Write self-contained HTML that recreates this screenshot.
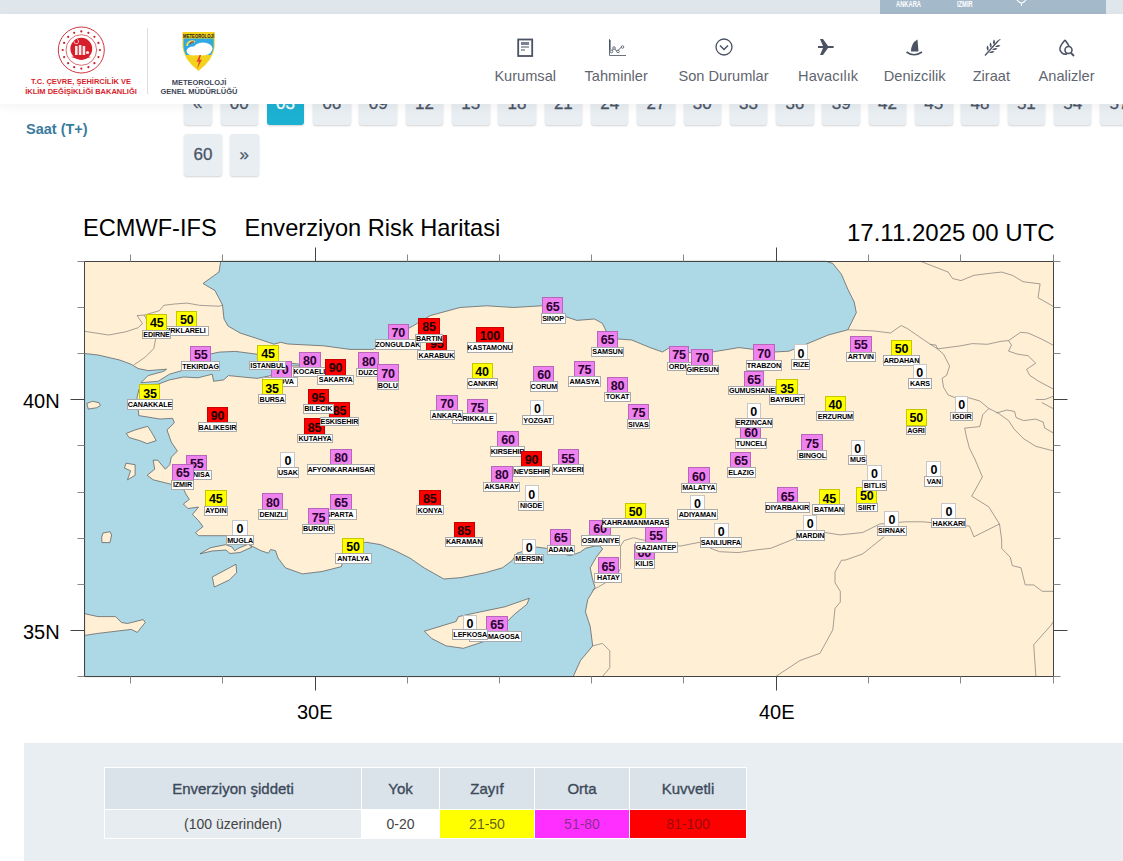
<!DOCTYPE html>
<html><head><meta charset="utf-8">
<style>
*{box-sizing:border-box;margin:0;padding:0}
html,body{width:1123px;height:861px;overflow:hidden;background:#fff;font-family:"Liberation Sans",sans-serif}
.abs{position:absolute}
.pg{position:absolute;height:42px;background:#e9eef2;border-radius:3px;box-shadow:0 1px 2px rgba(0,0,0,0.18);color:#4a5568;-webkit-text-stroke:0.3px currentColor;font-size:17px;text-align:center;line-height:42px}
.pg.act{background:#1cb1d2;color:#fff}
.nb{position:absolute;border:0.6px solid rgba(0,0,0,0.22);font-weight:bold;font-size:12.5px;line-height:17px;padding-top:0.3px;text-align:center;letter-spacing:-0.2px}
.mb{position:absolute;background:#fff;border:0.7px solid #aaa;font-weight:bold;font-size:7.2px;line-height:1;text-align:center;color:#000;white-space:nowrap;display:flex;justify-content:center;align-items:center;letter-spacing:-0.1px}
.nav{position:absolute;top:67.5px;font-size:14.6px;color:#5f6670;white-space:nowrap}
.ttl{position:absolute;font-size:24px;color:#000;white-space:nowrap;line-height:1}
.ax{position:absolute;font-size:20px;color:#000;white-space:nowrap;line-height:1}
table.lg{position:absolute;left:104px;top:767px;border-collapse:collapse;font-size:15px}
.lg td{border:1px solid #fff;text-align:center;color:#3b4a5a}
</style></head><body>
<!-- top bar -->
<div class="abs" style="left:0;top:0;width:1123px;height:13.5px;background:#dfe6ec"></div>
<div class="abs" style="left:880px;top:0;width:226px;height:13.5px;background:#a4b9ca"></div>
<div class="abs" style="left:895.5px;top:-0.5px;font-size:9px;color:#fff;font-weight:bold;line-height:9px;transform:scaleX(0.64);transform-origin:left">ANKARA</div>
<div class="abs" style="left:956.5px;top:-0.5px;font-size:9px;color:#fff;font-weight:bold;line-height:9px;transform:scaleX(0.64);transform-origin:left">İZMİR</div>
<svg class="abs" style="left:1016px;top:0" width="11" height="6" viewBox="0 0 11 6"><path d="M1 0 Q5.5 6 10 0" fill="none" stroke="#fff" stroke-width="1.2"/><line x1="5.5" y1="3" x2="5.5" y2="6" stroke="#fff" stroke-width="1"/></svg>

<!-- pagination -->
<div class="abs" style="left:26px;top:121px;font-size:14.5px;color:#3a7a9e;font-weight:bold;line-height:16px">Saat (T+)</div>
<div class="pg" style="left:184px;top:83px;width:27.5px">«</div>
<div class="pg" style="left:220.5px;top:83px;width:37.5px">00</div>
<div class="pg act" style="left:266.8px;top:83px;width:37.5px">03</div>
<div class="pg" style="left:313.1px;top:83px;width:37.5px">06</div>
<div class="pg" style="left:359.4px;top:83px;width:37.5px">09</div>
<div class="pg" style="left:405.7px;top:83px;width:37.5px">12</div>
<div class="pg" style="left:452.0px;top:83px;width:37.5px">15</div>
<div class="pg" style="left:498.3px;top:83px;width:37.5px">18</div>
<div class="pg" style="left:544.6px;top:83px;width:37.5px">21</div>
<div class="pg" style="left:590.9px;top:83px;width:37.5px">24</div>
<div class="pg" style="left:637.2px;top:83px;width:37.5px">27</div>
<div class="pg" style="left:683.5px;top:83px;width:37.5px">30</div>
<div class="pg" style="left:729.8px;top:83px;width:37.5px">33</div>
<div class="pg" style="left:776.1px;top:83px;width:37.5px">36</div>
<div class="pg" style="left:822.4px;top:83px;width:37.5px">39</div>
<div class="pg" style="left:868.7px;top:83px;width:37.5px">42</div>
<div class="pg" style="left:915.0px;top:83px;width:37.5px">45</div>
<div class="pg" style="left:961.3px;top:83px;width:37.5px">48</div>
<div class="pg" style="left:1007.6px;top:83px;width:37.5px">51</div>
<div class="pg" style="left:1053.9px;top:83px;width:37.5px">54</div>
<div class="pg" style="left:1100.2px;top:83px;width:37.5px">57</div>
<div class="pg" style="left:184px;top:134px;width:38px">60</div>
<div class="pg" style="left:230px;top:134px;width:28.5px">»</div>

<!-- header -->
<div class="abs" style="left:0;top:13.5px;width:1123px;height:90.5px;background:#fff;box-shadow:0 3px 10px rgba(0,0,0,0.05)"></div>
<!-- ministry logo -->
<svg class="abs" style="left:54px;top:24px" width="55" height="55" viewBox="0 0 55 55">
<circle cx="27.3" cy="26" r="23" fill="none" stroke="#c8202c" stroke-width="0.9"/>
<circle cx="27.3" cy="26" r="15.3" fill="none" stroke="#d0303a" stroke-width="0.7"/>
<circle cx="27.30" cy="7.40" r="1.1" fill="#c8202c"/><circle cx="34.42" cy="8.82" r="1.1" fill="#c8202c"/><circle cx="40.45" cy="12.85" r="1.1" fill="#c8202c"/><circle cx="44.48" cy="18.88" r="1.1" fill="#c8202c"/><circle cx="45.90" cy="26.00" r="1.1" fill="#c8202c"/><circle cx="44.48" cy="33.12" r="1.1" fill="#c8202c"/><circle cx="40.45" cy="39.15" r="1.1" fill="#c8202c"/><circle cx="34.42" cy="43.18" r="1.1" fill="#c8202c"/><circle cx="27.30" cy="44.60" r="1.1" fill="#c8202c"/><circle cx="20.18" cy="43.18" r="1.1" fill="#c8202c"/><circle cx="14.15" cy="39.15" r="1.1" fill="#c8202c"/><circle cx="10.12" cy="33.12" r="1.1" fill="#c8202c"/><circle cx="8.70" cy="26.00" r="1.1" fill="#c8202c"/><circle cx="10.12" cy="18.88" r="1.1" fill="#c8202c"/><circle cx="14.15" cy="12.85" r="1.1" fill="#c8202c"/><circle cx="20.18" cy="8.82" r="1.1" fill="#c8202c"/>
<circle cx="27.3" cy="24.7" r="10.9" fill="#d71f2b"/>
<rect x="21" y="22" width="2.6" height="9" fill="#fde8e8"/><rect x="24.8" y="21" width="2.6" height="10" fill="#fde8e8"/><rect x="28.6" y="22" width="2.6" height="9" fill="#fde8e8"/><circle cx="33.5" cy="28.5" r="1.6" fill="#fde8e8"/>
<path d="M20 17 a2.3 2.3 0 1 0 3.2 -1.6" fill="none" stroke="#fde8e8" stroke-width="0.8"/>
<path d="M17 33 Q27 30 37 33 L27.3 36 Z" fill="#d71f2b"/>
</svg>
<div class="abs" style="left:20px;top:77px;width:122px;text-align:center;font-size:7.5px;font-weight:bold;color:#d71f2b;line-height:9.5px">T.C. ÇEVRE, ŞEHİRCİLİK VE<br>İKLİM DEĞİŞİKLİĞİ BAKANLIĞI</div>
<div class="abs" style="left:147px;top:28px;width:1px;height:66px;background:#ddd"></div>
<!-- meteoroloji logo -->
<svg class="abs" style="left:181px;top:31px" width="35" height="41" viewBox="0 0 35 41">
<path d="M1.5 1 H33.7 V15 Q33 28 17.5 40 Q2 28 1.5 15 Z" fill="#f2d21c"/>
<path d="M2.6 7.6 H32.6 V17 Q32 20 30 24 H5 Q3 20 2.6 17 Z" fill="#30a8e2"/>
<text x="17.6" y="6.6" font-size="6.2" font-weight="bold" text-anchor="middle" fill="#1a1a1a" font-family="Liberation Sans" textLength="31" lengthAdjust="spacingAndGlyphs">METEOROLOJİ</text>
<path d="M6 15 a5 5 0 0 1 8 -4" fill="none" stroke="#f5e05a" stroke-width="1.6"/>
<path d="M9 13.5 a3 3 0 0 1 4 -2.5" fill="none" stroke="#b5422a" stroke-width="1.3"/>
<ellipse cx="22" cy="17.5" rx="9.5" ry="6" fill="#fff"/><ellipse cx="12.5" cy="20" rx="7" ry="4.5" fill="#fff"/><ellipse cx="20" cy="21" rx="10" ry="3.5" fill="#fff"/>
<path d="M18.5 24 L15.5 31 L18 30.5 L16 38 L21 28.5 L18.5 29 L20 24 Z" fill="#e8402a"/>
</svg>
<div class="abs" style="left:150px;top:77.5px;width:98px;text-align:center;font-size:7.5px;font-weight:bold;color:#3d4657;line-height:9px">METEOROLOJİ<br>GENEL MÜDÜRLÜĞÜ</div>
<svg class="abs" style="left:516px;top:38px" width="19" height="19" viewBox="0 0 19 19"><rect x="2.2" y="1.5" width="14" height="16.5" fill="none" stroke="#4a5263" stroke-width="1.8"/><rect x="5" y="4" width="8" height="3" fill="#7a8190"/><line x1="5" y1="9" x2="13" y2="9" stroke="#4a5263" stroke-width="1"/><line x1="5" y1="12" x2="9" y2="12" stroke="#4a5263" stroke-width="1"/></svg>
<div class="nav" style="left:494.4px">Kurumsal</div>
<svg class="abs" style="left:608px;top:38px" width="19" height="19" viewBox="0 0 19 19"><path d="M1.5 1 V17.5 H18" fill="none" stroke="#6a7280" stroke-width="1"/><line x1="1.8" y1="2" x2="1.8" y2="12" stroke="#4a5263" stroke-width="1.6"/><path d="M3 14 L6 10 L9 13.5 L13.5 9" fill="none" stroke="#4a5263" stroke-width="0.9"/><circle cx="3.5" cy="13.5" r="1.3" fill="#fff" stroke="#4a5263" stroke-width="0.8"/><circle cx="6" cy="10" r="1.3" fill="#fff" stroke="#4a5263" stroke-width="0.8"/><circle cx="10" cy="13.5" r="1.3" fill="#fff" stroke="#4a5263" stroke-width="0.8"/><circle cx="14.5" cy="9" r="1.3" fill="#fff" stroke="#4a5263" stroke-width="0.8"/></svg>
<div class="nav" style="left:584.5px">Tahminler</div>
<svg class="abs" style="left:715px;top:38px" width="19" height="19" viewBox="0 0 19 19"><circle cx="9" cy="9" r="8" fill="none" stroke="#4a5263" stroke-width="1.3"/><path d="M5 7.5 L9 11.5 L13 7.5" fill="none" stroke="#4a5263" stroke-width="1.5"/></svg>
<div class="nav" style="left:678.5px">Son Durumlar</div>
<svg class="abs" style="left:817px;top:38px" width="19" height="19" viewBox="0 0 19 19"><path d="M1 8 H6 L3 1 H6 L11 8 H16 Q18 9 16 10 H11 L6 17 H3 L6 10 H1 Z" fill="#4a5263"/></svg>
<div class="nav" style="left:798.1px">Havacılık</div>
<svg class="abs" style="left:905px;top:38px" width="19" height="19" viewBox="0 0 19 19"><path d="M6 13.5 Q6 5 12.5 1.5 Q13 8 13.5 13.5 Z" fill="#4a5263"/><path d="M1.5 14 Q9 19.5 17 14" fill="none" stroke="#4a5263" stroke-width="1.6"/></svg>
<div class="nav" style="left:883.8px">Denizcilik</div>
<svg class="abs" style="left:983px;top:38px" width="19" height="19" viewBox="0 0 19 19"><path d="M2 17.5 L15 3" stroke="#4a5263" stroke-width="1.3"/><path d="M5 13 Q2.5 10 4.5 7.5 Q6.5 10 5 13 M8 10 Q5.5 7 7.5 4.5 Q9.5 7 8 10 M11 7 Q9 4 11 1.5 Q13 4 11 7 M6 14.5 Q9 16 11.5 13.5 Q9 12 6 14.5 M9 11.5 Q12 13 14.5 10.5 Q12 9 9 11.5 M12 8.5 Q15 10 17.5 7.5 Q15 6 12 8.5 M13.5 4.5 Q16 3 18 1 Q15 1 13.5 4.5" fill="#4a5263"/></svg>
<div class="nav" style="left:972.7px">Ziraat</div>
<svg class="abs" style="left:1057px;top:38px" width="19" height="19" viewBox="0 0 19 19"><path d="M8 2 Q2 9 3 12 Q5 17 10 16" fill="none" stroke="#4a5263" stroke-width="1.6"/><path d="M8 2 Q11 6 12 8" fill="none" stroke="#4a5263" stroke-width="1.6"/><circle cx="11.5" cy="12" r="3.5" fill="none" stroke="#4a5263" stroke-width="1.6"/><path d="M14 15 L17 18" stroke="#4a5263" stroke-width="1.8"/></svg>
<div class="nav" style="left:1038.6px">Analizler</div>

<!-- map titles -->
<div class="ttl" style="left:83px;top:216.5px;font-size:23.6px">ECMWF-IFS</div>
<div class="ttl" style="left:244.5px;top:216.5px;font-size:23.6px">Enverziyon Risk Haritasi</div>
<div class="ttl" style="left:847px;top:221px">17.11.2025 00 UTC</div>
<svg width="1123" height="861" viewBox="0 0 1123 861" style="position:absolute;left:0;top:0">
<rect x="84.6" y="261.3" width="968.4" height="415.3" fill="#ffefd5"/>
<polygon points="220.7,261.3 826.3,261.3 832.8,263.5 841.4,274.2 847.8,289.2 854.2,302.0 856.3,312.7 850.0,325.5 847.8,329.8 828.0,335.1 806.7,344.0 789.0,351.2 774.7,352.0 739.0,347.6 712.3,352.0 690.4,352.7 669.6,347.6 662.5,352.0 650.0,347.6 631.7,340.0 618.0,339.0 606.2,331.1 602.3,323.3 594.4,319.0 576.8,320.4 565.0,316.4 559.7,308.4 542.0,305.8 513.4,307.5 486.7,305.8 460.0,307.5 430.3,315.6 412.5,326.2 385.8,340.5 373.3,349.4 350.0,349.4 323.4,345.8 287.8,344.0 280.7,342.3 274.0,344.2 257.0,338.5 240.0,333.0 228.0,326.0 224.0,319.0 222.5,305.0 215.0,290.6 203.0,283.5 219.0,272.0" fill="#add8e6" stroke="#555" stroke-width="0.7"/>
<polygon points="84.6,353.5 98.2,355.0 119.6,360.0 131.0,364.2 138.1,368.5 148.1,370.6 166.6,369.2 163.8,371.3 148.1,375.6 141.0,382.7 158.1,381.3 169.5,374.2 183.7,370.0 190.8,362.8 209.4,354.2 219.3,352.1 235.6,351.4 257.0,354.2 267.0,358.5 272.0,361.0 288.3,362.8 299.7,364.2 299.7,366.0 291.0,366.0 271.0,375.6 257.0,378.4 242.7,377.0 228.5,375.6 223.6,379.9 213.6,381.3 212.2,374.2 198.0,377.8 183.7,377.0 169.5,379.9 158.1,384.2 141.0,385.0 138.8,390.0 137.0,397.8 138.8,415.6 160.0,419.0 172.6,418.3 174.4,422.7 167.0,430.0 171.3,442.1 177.4,451.1 171.3,457.2 169.8,464.7 165.3,469.2 157.7,460.2 153.2,460.2 154.7,469.2 147.2,475.3 153.2,479.8 165.3,482.8 171.3,484.3 183.4,488.9 186.4,494.9 189.4,499.4 183.4,504.0 187.9,508.5 198.5,507.0 192.5,514.5 198.5,520.6 203.0,526.6 195.5,532.6 198.5,535.7 225.7,535.7 234.7,543.0 248.3,544.2 261.0,550.7 268.3,553.2 270.7,549.5 275.6,550.7 278.0,558.0 285.4,567.8 302.4,573.9 322.0,571.5 341.5,566.6 343.9,553.2 351.2,545.9 365.9,542.2 380.5,544.6 395.1,550.7 409.8,558.0 424.4,568.0 443.9,579.0 461.0,577.6 485.4,572.7 502.4,567.8 512.2,560.5 517.0,553.2 536.6,547.1 546.3,548.3 558.5,553.2 570.7,555.6 580.5,552.0 585.4,548.3 594.3,546.1 600.0,545.9 602.7,548.9 596.2,557.3 590.2,567.8 592.7,580.0 595.1,587.3 587.8,599.5 585.4,611.7 590.2,626.3 592.7,645.9 580.5,660.5 573.2,676.6 84.6,676.6" fill="#add8e6" stroke="#555" stroke-width="0.7"/>
<polygon points="86.8,403.4 92.5,401.3 99.0,402.7 100.4,405.5 96.8,407.7 88.3,409.1" fill="#ffefd5" stroke="#555" stroke-width="0.7"/>
<polygon points="126.3,433.4 135.0,430.0 147.7,426.3 152.0,433.0 156.2,440.6 147.2,443.6 139.6,440.6 129.0,437.5" fill="#ffefd5" stroke="#555" stroke-width="0.7"/>
<polygon points="126.0,463.2 135.1,464.7 135.1,475.3 127.5,479.8 130.6,470.8 124.5,468.0" fill="#ffefd5" stroke="#555" stroke-width="0.7"/>
<polygon points="103.0,533.0 110.0,531.7 111.6,535.0 110.0,542.6 102.0,542.6 101.7,537.0" fill="#ffefd5" stroke="#555" stroke-width="0.7"/>
<polygon points="212.3,577.0 236.0,564.3 236.6,572.7 229.3,580.0 214.3,587.0" fill="#ffefd5" stroke="#555" stroke-width="0.7"/>
<polygon points="84.6,613.7 97.8,616.6 115.5,616.6 121.5,622.5 127.4,623.5 143.2,619.6 145.2,622.5 137.3,632.4 131.3,629.4 97.8,633.4 84.6,635.4" fill="#ffefd5" stroke="#555" stroke-width="0.7"/>
<polygon points="424.4,631.2 456.1,621.5 458.5,616.6 475.6,612.9 504.9,606.8 529.3,598.3 526.8,604.4 514.6,614.1 507.3,621.5 502.4,638.5 485.4,641.0 463.4,648.3 446.3,645.9 431.7,638.5" fill="#ffefd5" stroke="#555" stroke-width="0.7"/>
<polygon points="200.0,553.8 210.6,547.7 225.7,544.7 232.0,547.0 234.7,550.8 239.0,548.0 248.3,544.2 252.0,547.0 240.0,552.5 230.0,553.5 226.0,550.0 212.0,551.0" fill="#ffefd5" stroke="#555" stroke-width="0.7"/>
<polyline points="84.6,331.3 108.7,335.0 125.4,331.9 137.9,327.8 142.5,323.6 137.1,315.6 144.2,315.1" fill="none" stroke="#666" stroke-width="0.6"/>
<polyline points="144.2,315.1 159.4,310.7 163.8,305.3 174.5,304.0 187.0,303.1 199.5,305.3 219.0,306.2 222.6,305.3" fill="none" stroke="#666" stroke-width="0.6"/>
<polyline points="144.2,315.1 150.0,325.0 155.8,338.3 153.8,348.5 145.3,357.1 133.9,364.9" fill="none" stroke="#666" stroke-width="0.6"/>
<polyline points="920.5,261.3 948.2,272.1 952.5,278.5 961.0,280.6 973.9,275.3 991.0,273.2 1001.7,272.1 1012.3,275.3 1023.0,281.7 1040.1,283.9 1038.0,297.7 1053.0,306.3" fill="none" stroke="#666" stroke-width="0.6"/>
<polyline points="847.8,329.8 873.4,330.9 890.5,333.0 901.2,325.5 907.6,328.7 924.7,340.5 937.5,348.9" fill="none" stroke="#666" stroke-width="0.6"/>
<polyline points="930.0,344.3 936.0,345.1 937.5,348.9 960.2,345.9 972.3,343.6 987.4,344.3 1001.0,341.3 1008.5,340.6 1020.6,332.3 1028.1,333.0 1041.7,339.1 1053.0,345.1" fill="none" stroke="#666" stroke-width="0.6"/>
<polyline points="937.5,348.9 943.6,354.2 949.6,366.2 946.6,375.3 942.1,378.3 943.6,387.4 948.1,394.9 955.7,397.9 969.3,397.9 979.8,401.0 988.9,408.5 998.0,413.0 1008.5,420.6 1014.6,429.7 1023.6,438.7 1035.7,446.3 1053.0,450.8" fill="none" stroke="#666" stroke-width="0.6"/>
<polyline points="1008.5,340.6 1011.5,345.1 1008.5,351.1 1017.6,354.2 1028.1,355.7 1035.7,363.2 1026.6,369.3 1029.7,375.3 1038.7,381.3 1053.0,388.9" fill="none" stroke="#666" stroke-width="0.6"/>
<polyline points="1035.7,399.5 1044.8,399.5 1053.0,396.4" fill="none" stroke="#666" stroke-width="0.6"/>
<polyline points="1041.7,402.5 1053.0,408.5" fill="none" stroke="#666" stroke-width="0.6"/>
<polyline points="996.4,413.0 1007.0,410.0 1014.6,411.5 1016.1,417.6 1023.6,420.6 1035.7,419.1 1043.2,422.1 1044.8,428.1 1053.0,432.7" fill="none" stroke="#666" stroke-width="0.6"/>
<polyline points="988.9,408.5 982.8,414.6 979.8,426.6 964.7,428.1 966.2,435.7 969.3,447.8 975.3,460.0 982.4,476.9 971.7,496.2 988.8,506.9 999.5,524.0" fill="none" stroke="#666" stroke-width="0.6"/>
<polyline points="999.5,524.0 991.0,528.2 973.9,536.8 969.6,526.1 948.2,524.0 922.6,521.8 905.5,521.8 879.8,524.0 862.7,532.5 840.0,534.9 824.4,532.4 795.1,538.5 770.7,548.3 757.0,549.8 738.3,552.6 719.6,551.7 712.1,548.9 699.0,542.4 689.7,544.2 680.3,546.1 641.0,539.6 633.6,537.7 624.2,540.5 620.5,546.1 620.5,568.5 618.6,572.3 610.0,580.0 600.0,586.0 592.7,590.0" fill="none" stroke="#666" stroke-width="0.6"/>
<polyline points="884.1,536.8 862.7,553.9 845.6,560.0 841.4,560.3 835.0,572.0 835.0,582.7 840.3,591.3 840.3,602.0 835.0,608.4 832.8,629.8 820.0,653.3 800.0,660.5 775.6,676.6" fill="none" stroke="#666" stroke-width="0.6"/>
<polyline points="999.5,524.0 1001.7,540.0 1001.7,548.5 1010.2,557.1 1012.3,565.6 1021.0,567.8 1025.2,584.9 1033.7,584.9 1042.3,591.3 1053.0,591.3" fill="none" stroke="#666" stroke-width="0.6"/>
<polyline points="1053.0,622.0 1050.8,625.5 1033.7,644.7 1035.9,676.6" fill="none" stroke="#666" stroke-width="0.6"/>
<polyline points="592.7,645.9 602.4,643.4 609.8,650.7 609.8,667.8 602.4,676.6" fill="none" stroke="#666" stroke-width="0.6"/>
<rect x="84.5" y="261.5" width="969" height="415" fill="none" stroke="#444" stroke-width="1"/>
<line x1="130.5" y1="261.5" x2="130.5" y2="254.5" stroke="#888" stroke-width="1"/>
<line x1="130.5" y1="676.5" x2="130.5" y2="683.5" stroke="#888" stroke-width="1"/>
<line x1="222.5" y1="261.5" x2="222.5" y2="254.5" stroke="#888" stroke-width="1"/>
<line x1="222.5" y1="676.5" x2="222.5" y2="683.5" stroke="#888" stroke-width="1"/>
<line x1="315.5" y1="261.5" x2="315.5" y2="247.5" stroke="#444" stroke-width="1"/>
<line x1="315.5" y1="676.5" x2="315.5" y2="690.5" stroke="#444" stroke-width="1"/>
<line x1="407.5" y1="261.5" x2="407.5" y2="254.5" stroke="#888" stroke-width="1"/>
<line x1="407.5" y1="676.5" x2="407.5" y2="683.5" stroke="#888" stroke-width="1"/>
<line x1="499.5" y1="261.5" x2="499.5" y2="254.5" stroke="#888" stroke-width="1"/>
<line x1="499.5" y1="676.5" x2="499.5" y2="683.5" stroke="#888" stroke-width="1"/>
<line x1="591.5" y1="261.5" x2="591.5" y2="254.5" stroke="#888" stroke-width="1"/>
<line x1="591.5" y1="676.5" x2="591.5" y2="683.5" stroke="#888" stroke-width="1"/>
<line x1="683.5" y1="261.5" x2="683.5" y2="254.5" stroke="#888" stroke-width="1"/>
<line x1="683.5" y1="676.5" x2="683.5" y2="683.5" stroke="#888" stroke-width="1"/>
<line x1="776.5" y1="261.5" x2="776.5" y2="247.5" stroke="#444" stroke-width="1"/>
<line x1="776.5" y1="676.5" x2="776.5" y2="690.5" stroke="#444" stroke-width="1"/>
<line x1="868.5" y1="261.5" x2="868.5" y2="254.5" stroke="#888" stroke-width="1"/>
<line x1="868.5" y1="676.5" x2="868.5" y2="683.5" stroke="#888" stroke-width="1"/>
<line x1="960.5" y1="261.5" x2="960.5" y2="254.5" stroke="#888" stroke-width="1"/>
<line x1="960.5" y1="676.5" x2="960.5" y2="683.5" stroke="#888" stroke-width="1"/>
<line x1="1053.5" y1="261.5" x2="1053.5" y2="254.5" stroke="#888" stroke-width="1"/>
<line x1="1053.5" y1="676.5" x2="1053.5" y2="683.5" stroke="#888" stroke-width="1"/>
<line x1="84.5" y1="261.5" x2="77.5" y2="261.5" stroke="#888" stroke-width="1"/>
<line x1="1053.5" y1="261.5" x2="1060.5" y2="261.5" stroke="#888" stroke-width="1"/>
<line x1="84.5" y1="307.5" x2="77.5" y2="307.5" stroke="#888" stroke-width="1"/>
<line x1="1053.5" y1="307.5" x2="1060.5" y2="307.5" stroke="#888" stroke-width="1"/>
<line x1="84.5" y1="353.5" x2="77.5" y2="353.5" stroke="#888" stroke-width="1"/>
<line x1="1053.5" y1="353.5" x2="1060.5" y2="353.5" stroke="#888" stroke-width="1"/>
<line x1="84.5" y1="399.5" x2="70.5" y2="399.5" stroke="#444" stroke-width="1"/>
<line x1="1053.5" y1="399.5" x2="1067.5" y2="399.5" stroke="#444" stroke-width="1"/>
<line x1="84.5" y1="445.5" x2="77.5" y2="445.5" stroke="#888" stroke-width="1"/>
<line x1="1053.5" y1="445.5" x2="1060.5" y2="445.5" stroke="#888" stroke-width="1"/>
<line x1="84.5" y1="492.5" x2="77.5" y2="492.5" stroke="#888" stroke-width="1"/>
<line x1="1053.5" y1="492.5" x2="1060.5" y2="492.5" stroke="#888" stroke-width="1"/>
<line x1="84.5" y1="538.5" x2="77.5" y2="538.5" stroke="#888" stroke-width="1"/>
<line x1="1053.5" y1="538.5" x2="1060.5" y2="538.5" stroke="#888" stroke-width="1"/>
<line x1="84.5" y1="584.5" x2="77.5" y2="584.5" stroke="#888" stroke-width="1"/>
<line x1="1053.5" y1="584.5" x2="1060.5" y2="584.5" stroke="#888" stroke-width="1"/>
<line x1="84.5" y1="630.5" x2="70.5" y2="630.5" stroke="#444" stroke-width="1"/>
<line x1="1053.5" y1="630.5" x2="1067.5" y2="630.5" stroke="#444" stroke-width="1"/>
<line x1="84.5" y1="676.5" x2="77.5" y2="676.5" stroke="#888" stroke-width="1"/>
<line x1="1053.5" y1="676.5" x2="1060.5" y2="676.5" stroke="#888" stroke-width="1"/>
</svg>
<div class="ax" style="left:23px;top:391px">40N</div>
<div class="ax" style="left:23px;top:622px">35N</div>
<div class="ax" style="left:297px;top:702px">30E</div>
<div class="ax" style="left:759px;top:702px">40E</div>
<div class="nb" style="left:176.1px;top:311.2px;width:21.2px;height:17.5px;background:#ffff00;color:#000">50</div>
<div class="mb" style="left:160.0px;top:326.2px;width:49.0px;height:9.8px">KIRKLARELI</div>
<div class="nb" style="left:270.8px;top:361.0px;width:21.7px;height:17.5px;background:#ee82ee;color:#2a0030">70</div>
<div class="mb" style="left:262.0px;top:377.3px;width:35.5px;height:9.3px">YALOVA</div>
<div class="nb" style="left:358.1px;top:352.4px;width:21.2px;height:17.4px;background:#ee82ee;color:#2a0030">80</div>
<div class="mb" style="left:355.6px;top:368.1px;width:29.4px;height:9.3px">DUZCE</div>
<div class="nb" style="left:304.0px;top:418.4px;width:20.9px;height:17.5px;background:#ff0000;color:#1a0000">85</div>
<div class="mb" style="left:297.0px;top:433.6px;width:36.2px;height:9.5px">KUTAHYA</div>
<div class="nb" style="left:426.1px;top:335.0px;width:21.2px;height:17.4px;background:#ff0000;color:#1a0000">95</div>
<div class="mb" style="left:417.4px;top:350.1px;width:38.1px;height:10.4px">KARABUK</div>
<div class="nb" style="left:668.5px;top:345.8px;width:20.9px;height:17.7px;background:#ee82ee;color:#2a0030">75</div>
<div class="mb" style="left:666.5px;top:361.6px;width:25.5px;height:9.9px">ORDU</div>
<div class="nb" style="left:740.3px;top:424.0px;width:21.2px;height:17.1px;background:#ee82ee;color:#2a0030">60</div>
<div class="mb" style="left:734.6px;top:438.1px;width:32.9px;height:10.6px">TUNCELI</div>
<div class="nb" style="left:633.6px;top:544.2px;width:21.1px;height:16.8px;background:#ee82ee;color:#2a0030">60</div>
<div class="mb" style="left:633.6px;top:558.7px;width:21.1px;height:10.1px">KILIS</div>
<div class="nb" style="left:589.3px;top:519.5px;width:21.5px;height:17.2px;background:#ee82ee;color:#2a0030">60</div>
<div class="mb" style="left:580.8px;top:534.9px;width:39.3px;height:10.9px">OSMANIYE</div>
<div class="nb" style="left:186.3px;top:455.0px;width:21.1px;height:17.1px;background:#ee82ee;color:#2a0030">55</div>
<div class="mb" style="left:180.0px;top:470.1px;width:31.7px;height:10.0px">MANISA</div>
<div class="nb" style="left:466.7px;top:398.5px;width:21.2px;height:17.5px;background:#ee82ee;color:#2a0030">75</div>
<div class="mb" style="left:452.0px;top:413.0px;width:45.2px;height:11.0px">KIRIKKALE</div>
<div class="nb" style="left:330.3px;top:494.1px;width:21.4px;height:17.5px;background:#ee82ee;color:#2a0030">65</div>
<div class="mb" style="left:320.0px;top:509.0px;width:37.0px;height:10.7px">ISPARTA</div>
<div class="nb" style="left:486.3px;top:616.0px;width:21.4px;height:17.0px;background:#ee82ee;color:#2a0030">65</div>
<div class="mb" style="left:469.0px;top:631.1px;width:52.9px;height:11.4px">GAZIMAGOSA</div>
<div class="nb" style="left:328.9px;top:401.7px;width:21.0px;height:17.5px;background:#ff0000;color:#1a0000">85</div>
<div class="mb" style="left:319.5px;top:416.7px;width:39.8px;height:9.8px">ESKISEHIR</div>
<div class="nb" style="left:307.7px;top:388.5px;width:21.2px;height:17.5px;background:#ff0000;color:#1a0000">95</div>
<div class="mb" style="left:302.7px;top:404.2px;width:31.2px;height:9.8px">BILECIK</div>
<div class="nb" style="left:146.2px;top:313.7px;width:21.2px;height:17.5px;background:#ffff00;color:#000">45</div>
<div class="mb" style="left:142.0px;top:329.5px;width:29.0px;height:9.6px">EDIRNE</div>
<div class="nb" style="left:189.8px;top:346.1px;width:21.7px;height:17.5px;background:#ee82ee;color:#2a0030">55</div>
<div class="mb" style="left:181.0px;top:361.3px;width:39.2px;height:9.9px">TEKIRDAG</div>
<div class="nb" style="left:139.4px;top:384.3px;width:21.0px;height:17.4px;background:#ffff00;color:#000">35</div>
<div class="mb" style="left:127.0px;top:399.2px;width:45.9px;height:10.6px">CANAKKALE</div>
<div class="nb" style="left:206.8px;top:407.2px;width:21.2px;height:17.5px;background:#ff0000;color:#1a0000">90</div>
<div class="mb" style="left:197.8px;top:422.2px;width:39.4px;height:10.0px">BALIKESIR</div>
<div class="nb" style="left:261.6px;top:379.3px;width:21.0px;height:17.4px;background:#ffff00;color:#000">35</div>
<div class="mb" style="left:257.9px;top:394.2px;width:28.4px;height:9.9px">BURSA</div>
<div class="nb" style="left:257.1px;top:344.9px;width:21.7px;height:17.4px;background:#ffff00;color:#000">45</div>
<div class="mb" style="left:249.1px;top:360.5px;width:37.4px;height:9.9px">ISTANBUL</div>
<div class="nb" style="left:299.0px;top:351.9px;width:21.7px;height:17.4px;background:#ee82ee;color:#2a0030">80</div>
<div class="mb" style="left:292.5px;top:367.3px;width:33.9px;height:9.3px">KOCAELI</div>
<div class="nb" style="left:325.0px;top:359.0px;width:21.1px;height:17.5px;background:#ff0000;color:#1a0000">90</div>
<div class="mb" style="left:317.0px;top:375.0px;width:37.4px;height:9.9px">SAKARYA</div>
<div class="nb" style="left:377.3px;top:364.3px;width:21.4px;height:17.5px;background:#ee82ee;color:#2a0030">70</div>
<div class="mb" style="left:376.8px;top:380.5px;width:21.9px;height:9.4px">BOLU</div>
<div class="nb" style="left:387.5px;top:324.2px;width:21.6px;height:17.5px;background:#ee82ee;color:#2a0030">70</div>
<div class="mb" style="left:374.5px;top:339.4px;width:46.6px;height:10.3px">ZONGULDAK</div>
<div class="nb" style="left:418.1px;top:318.2px;width:21.7px;height:17.5px;background:#ff0000;color:#1a0000">85</div>
<div class="mb" style="left:414.9px;top:333.7px;width:28.6px;height:9.3px">BARTIN</div>
<div class="nb" style="left:476.0px;top:327.0px;width:27.9px;height:17.4px;background:#ff0000;color:#1a0000">100</div>
<div class="mb" style="left:466.5px;top:341.9px;width:46.9px;height:11.1px">KASTAMONU</div>
<div class="nb" style="left:542.1px;top:297.4px;width:21.4px;height:17.7px;background:#ee82ee;color:#2a0030">65</div>
<div class="mb" style="left:540.6px;top:313.0px;width:25.0px;height:10.5px">SINOP</div>
<div class="nb" style="left:597.0px;top:331.1px;width:20.9px;height:17.7px;background:#ee82ee;color:#2a0030">65</div>
<div class="mb" style="left:590.9px;top:346.9px;width:33.3px;height:9.7px">SAMSUN</div>
<div class="nb" style="left:471.5px;top:363.1px;width:21.2px;height:17.5px;background:#ffff00;color:#000">40</div>
<div class="mb" style="left:466.5px;top:378.1px;width:31.9px;height:10.5px">CANKIRI</div>
<div class="nb" style="left:533.3px;top:366.1px;width:21.2px;height:17.4px;background:#ee82ee;color:#2a0030">60</div>
<div class="mb" style="left:529.6px;top:381.1px;width:28.6px;height:10.5px">CORUM</div>
<div class="nb" style="left:573.9px;top:361.1px;width:21.2px;height:17.5px;background:#ee82ee;color:#2a0030">75</div>
<div class="mb" style="left:567.7px;top:376.1px;width:33.7px;height:10.5px">AMASYA</div>
<div class="nb" style="left:606.8px;top:376.6px;width:21.2px;height:17.4px;background:#ee82ee;color:#2a0030">80</div>
<div class="mb" style="left:603.6px;top:391.8px;width:27.7px;height:9.8px">TOKAT</div>
<div class="nb" style="left:691.4px;top:348.8px;width:21.6px;height:17.6px;background:#ee82ee;color:#2a0030">70</div>
<div class="mb" style="left:685.5px;top:364.9px;width:33.9px;height:9.9px">GIRESUN</div>
<div class="nb" style="left:753.1px;top:344.3px;width:21.6px;height:17.5px;background:#ee82ee;color:#2a0030">70</div>
<div class="mb" style="left:745.6px;top:360.0px;width:36.8px;height:10.7px">TRABZON</div>
<div class="nb" style="left:793.6px;top:344.3px;width:14.7px;height:15.6px;background:#ffffff;color:#000">0</div>
<div class="mb" style="left:791.4px;top:358.8px;width:19.0px;height:11.1px">RIZE</div>
<div class="nb" style="left:849.9px;top:336.2px;width:21.8px;height:17.5px;background:#ee82ee;color:#2a0030">55</div>
<div class="mb" style="left:846.1px;top:351.7px;width:29.5px;height:10.1px">ARTVIN</div>
<div class="nb" style="left:890.5px;top:340.1px;width:21.8px;height:17.5px;background:#ffff00;color:#000">50</div>
<div class="mb" style="left:882.6px;top:355.0px;width:37.8px;height:10.7px">ARDAHAN</div>
<div class="nb" style="left:912.5px;top:363.6px;width:14.4px;height:17.5px;background:#ffffff;color:#000">0</div>
<div class="mb" style="left:908.3px;top:378.0px;width:23.3px;height:10.5px">KARS</div>
<div class="nb" style="left:743.7px;top:370.5px;width:20.6px;height:17.5px;background:#ee82ee;color:#2a0030">65</div>
<div class="mb" style="left:728.0px;top:386.2px;width:48.2px;height:9.2px">GUMUSHANE</div>
<div class="nb" style="left:776.2px;top:379.3px;width:21.4px;height:17.4px;background:#ffff00;color:#000">35</div>
<div class="mb" style="left:768.7px;top:394.3px;width:36.8px;height:10.9px">BAYBURT</div>
<div class="nb" style="left:824.5px;top:395.8px;width:21.7px;height:17.1px;background:#ffff00;color:#000">40</div>
<div class="mb" style="left:816.3px;top:411.2px;width:38.2px;height:9.9px">ERZURUM</div>
<div class="nb" style="left:954.6px;top:396.1px;width:13.9px;height:17.1px;background:#ffffff;color:#000">0</div>
<div class="mb" style="left:950.4px;top:411.6px;width:23.1px;height:9.5px">IGDIR</div>
<div class="nb" style="left:905.5px;top:408.5px;width:21.4px;height:17.6px;background:#ffff00;color:#000">50</div>
<div class="mb" style="left:905.5px;top:425.6px;width:20.9px;height:9.5px">AGRI</div>
<div class="nb" style="left:436.1px;top:394.8px;width:21.7px;height:17.4px;background:#ee82ee;color:#2a0030">70</div>
<div class="mb" style="left:430.3px;top:410.0px;width:33.2px;height:10.3px">ANKARA</div>
<div class="nb" style="left:530.3px;top:399.8px;width:14.2px;height:17.4px;background:#ffffff;color:#000">0</div>
<div class="mb" style="left:521.6px;top:415.0px;width:32.1px;height:10.3px">YOZGAT</div>
<div class="nb" style="left:628.0px;top:403.5px;width:21.2px;height:17.5px;background:#ee82ee;color:#2a0030">75</div>
<div class="mb" style="left:626.8px;top:419.2px;width:23.2px;height:9.9px">SIVAS</div>
<div class="nb" style="left:497.2px;top:430.5px;width:21.6px;height:17.4px;background:#ee82ee;color:#2a0030">60</div>
<div class="mb" style="left:489.7px;top:446.2px;width:35.6px;height:10.6px">KIRSEHIR</div>
<div class="nb" style="left:490.9px;top:466.1px;width:21.7px;height:17.5px;background:#ee82ee;color:#2a0030">80</div>
<div class="mb" style="left:482.9px;top:481.8px;width:37.4px;height:10.6px">AKSARAY</div>
<div class="nb" style="left:520.8px;top:451.2px;width:21.2px;height:17.4px;background:#ff0000;color:#1a0000">90</div>
<div class="mb" style="left:513.4px;top:466.4px;width:36.6px;height:10.3px">NEVSEHIR</div>
<div class="nb" style="left:557.5px;top:449.4px;width:21.2px;height:17.5px;background:#ee82ee;color:#2a0030">55</div>
<div class="mb" style="left:552.0px;top:464.4px;width:32.4px;height:10.6px">KAYSERI</div>
<div class="nb" style="left:524.6px;top:485.3px;width:14.2px;height:17.5px;background:#ffffff;color:#000">0</div>
<div class="mb" style="left:518.3px;top:500.5px;width:25.7px;height:10.4px">NIGDE</div>
<div class="nb" style="left:419.1px;top:489.8px;width:21.5px;height:17.5px;background:#ff0000;color:#1a0000">85</div>
<div class="mb" style="left:415.6px;top:505.0px;width:28.7px;height:10.3px">KONYA</div>
<div class="nb" style="left:453.5px;top:521.5px;width:21.2px;height:17.4px;background:#ff0000;color:#1a0000">85</div>
<div class="mb" style="left:444.8px;top:536.7px;width:38.6px;height:10.6px">KARAMAN</div>
<div class="nb" style="left:522.1px;top:539.2px;width:14.2px;height:17.4px;background:#ffffff;color:#000">0</div>
<div class="mb" style="left:514.1px;top:554.1px;width:29.9px;height:10.0px">MERSIN</div>
<div class="nb" style="left:550.3px;top:529.2px;width:21.1px;height:17.5px;background:#ee82ee;color:#2a0030">65</div>
<div class="mb" style="left:547.0px;top:544.7px;width:27.9px;height:10.5px">ADANA</div>
<div class="nb" style="left:624.6px;top:502.7px;width:21.7px;height:17.2px;background:#ffff00;color:#000">50</div>
<div class="mb" style="left:601.8px;top:517.5px;width:67.3px;height:10.5px">KAHRAMANMARAS</div>
<div class="nb" style="left:645.4px;top:527.0px;width:21.3px;height:16.9px;background:#ee82ee;color:#2a0030">55</div>
<div class="mb" style="left:634.5px;top:542.4px;width:43.0px;height:10.3px">GAZIANTEP</div>
<div class="nb" style="left:597.7px;top:557.3px;width:21.3px;height:16.8px;background:#ee82ee;color:#2a0030">65</div>
<div class="mb" style="left:594.3px;top:572.7px;width:28.1px;height:10.5px">HATAY</div>
<div class="nb" style="left:690.2px;top:494.7px;width:14.4px;height:16.8px;background:#ffffff;color:#000">0</div>
<div class="mb" style="left:677.1px;top:509.1px;width:40.6px;height:10.9px">ADIYAMAN</div>
<div class="nb" style="left:713.6px;top:522.7px;width:15.0px;height:16.9px;background:#ffffff;color:#000">0</div>
<div class="mb" style="left:699.6px;top:537.2px;width:42.4px;height:11.0px">SANLIURFA</div>
<div class="nb" style="left:688.0px;top:467.3px;width:21.6px;height:17.5px;background:#ee82ee;color:#2a0030">60</div>
<div class="mb" style="left:680.5px;top:482.5px;width:36.6px;height:10.3px">MALATYA</div>
<div class="nb" style="left:746.5px;top:402.5px;width:14.3px;height:17.4px;background:#ffffff;color:#000">0</div>
<div class="mb" style="left:734.6px;top:417.7px;width:38.6px;height:10.3px">ERZINCAN</div>
<div class="nb" style="left:730.3px;top:451.9px;width:21.2px;height:17.4px;background:#ee82ee;color:#2a0030">65</div>
<div class="mb" style="left:726.6px;top:467.3px;width:29.2px;height:10.6px">ELAZIG</div>
<div class="nb" style="left:801.4px;top:434.4px;width:21.2px;height:17.5px;background:#ee82ee;color:#2a0030">75</div>
<div class="mb" style="left:797.4px;top:449.9px;width:29.9px;height:10.5px">BINGOL</div>
<div class="nb" style="left:777.0px;top:487.3px;width:21.2px;height:17.4px;background:#ee82ee;color:#2a0030">65</div>
<div class="mb" style="left:764.5px;top:502.2px;width:45.6px;height:10.6px">DIYARBAKIR</div>
<div class="nb" style="left:803.1px;top:515.2px;width:14.2px;height:17.4px;background:#ffffff;color:#000">0</div>
<div class="mb" style="left:795.7px;top:530.4px;width:29.4px;height:10.3px">MARDIN</div>
<div class="nb" style="left:818.6px;top:489.3px;width:21.2px;height:17.4px;background:#ffff00;color:#000">45</div>
<div class="mb" style="left:812.4px;top:504.2px;width:33.1px;height:10.6px">BATMAN</div>
<div class="nb" style="left:856.3px;top:486.6px;width:21.0px;height:18.1px;background:#ffff00;color:#000">50</div>
<div class="mb" style="left:855.7px;top:502.5px;width:22.0px;height:9.7px">SIIRT</div>
<div class="nb" style="left:850.6px;top:440.0px;width:14.3px;height:16.6px;background:#ffffff;color:#000">0</div>
<div class="mb" style="left:848.4px;top:454.6px;width:19.0px;height:10.8px">MUS</div>
<div class="nb" style="left:867.4px;top:465.2px;width:14.2px;height:16.7px;background:#ffffff;color:#000">0</div>
<div class="mb" style="left:862.3px;top:480.3px;width:25.0px;height:10.5px">BITLIS</div>
<div class="nb" style="left:926.4px;top:460.9px;width:15.0px;height:16.5px;background:#ffffff;color:#000">0</div>
<div class="mb" style="left:924.3px;top:475.8px;width:19.2px;height:11.4px">VAN</div>
<div class="nb" style="left:884.1px;top:510.7px;width:15.4px;height:16.5px;background:#ffffff;color:#000">0</div>
<div class="mb" style="left:876.6px;top:525.6px;width:30.0px;height:10.3px">SIRNAK</div>
<div class="nb" style="left:941.4px;top:503.0px;width:15.0px;height:16.7px;background:#ffffff;color:#000">0</div>
<div class="mb" style="left:931.1px;top:518.1px;width:35.3px;height:10.3px">HAKKARI</div>
<div class="nb" style="left:280.3px;top:451.8px;width:15.0px;height:17.5px;background:#ffffff;color:#000">0</div>
<div class="mb" style="left:276.5px;top:467.3px;width:22.8px;height:10.7px">USAK</div>
<div class="nb" style="left:330.3px;top:448.5px;width:21.4px;height:17.6px;background:#ee82ee;color:#2a0030">80</div>
<div class="mb" style="left:307.0px;top:464.1px;width:67.8px;height:10.7px">AFYONKARAHISAR</div>
<div class="nb" style="left:262.2px;top:493.4px;width:21.3px;height:17.6px;background:#ee82ee;color:#2a0030">80</div>
<div class="mb" style="left:258.3px;top:509.0px;width:29.5px;height:10.7px">DENIZLI</div>
<div class="nb" style="left:307.9px;top:508.4px;width:21.4px;height:17.5px;background:#ee82ee;color:#2a0030">75</div>
<div class="mb" style="left:301.5px;top:523.5px;width:33.3px;height:10.5px">BURDUR</div>
<div class="nb" style="left:342.1px;top:537.9px;width:22.0px;height:17.9px;background:#ffff00;color:#000">50</div>
<div class="mb" style="left:334.6px;top:553.4px;width:37.0px;height:10.5px">ANTALYA</div>
<div class="nb" style="left:204.9px;top:490.2px;width:21.8px;height:17.8px;background:#ffff00;color:#000">45</div>
<div class="mb" style="left:203.8px;top:506.2px;width:24.2px;height:9.6px">AYDIN</div>
<div class="nb" style="left:232.2px;top:519.5px;width:15.4px;height:17.7px;background:#ffffff;color:#000">0</div>
<div class="mb" style="left:226.3px;top:535.0px;width:27.7px;height:10.3px">MUGLA</div>
<div class="nb" style="left:171.8px;top:464.2px;width:22.0px;height:17.5px;background:#ee82ee;color:#2a0030">65</div>
<div class="mb" style="left:171.3px;top:480.1px;width:22.3px;height:9.7px">IZMIR</div>
<div class="nb" style="left:462.7px;top:614.7px;width:14.5px;height:16.0px;background:#ffffff;color:#000">0</div>
<div class="mb" style="left:452.3px;top:628.9px;width:35.8px;height:10.9px">LEFKOSA</div>

<!-- legend -->
<div class="abs" style="left:24px;top:743px;width:1099px;height:118px;background:#e9eef2"></div>
<table class="lg">
<tr style="height:42px;background:#dbe3ea;-webkit-text-stroke:0.35px #3b4a5a">
<td style="width:257px">Enverziyon şiddeti</td><td style="width:78px">Yok</td><td style="width:95px">Zayıf</td><td style="width:95px">Orta</td><td style="width:117px">Kuvvetli</td></tr>
<tr style="height:29px;font-size:14px">
<td style="background:#e6ecf0;color:#444">(100 üzerinden)</td><td style="background:#fff;color:#444">0-20</td><td style="background:#ffff00;color:rgba(40,40,40,0.75)">21-50</td><td style="background:#ff30ff;color:rgba(60,40,60,0.6)">51-80</td><td style="background:#ff0000;color:rgba(60,20,20,0.55)">81-100</td></tr>
</table>
</body></html>
